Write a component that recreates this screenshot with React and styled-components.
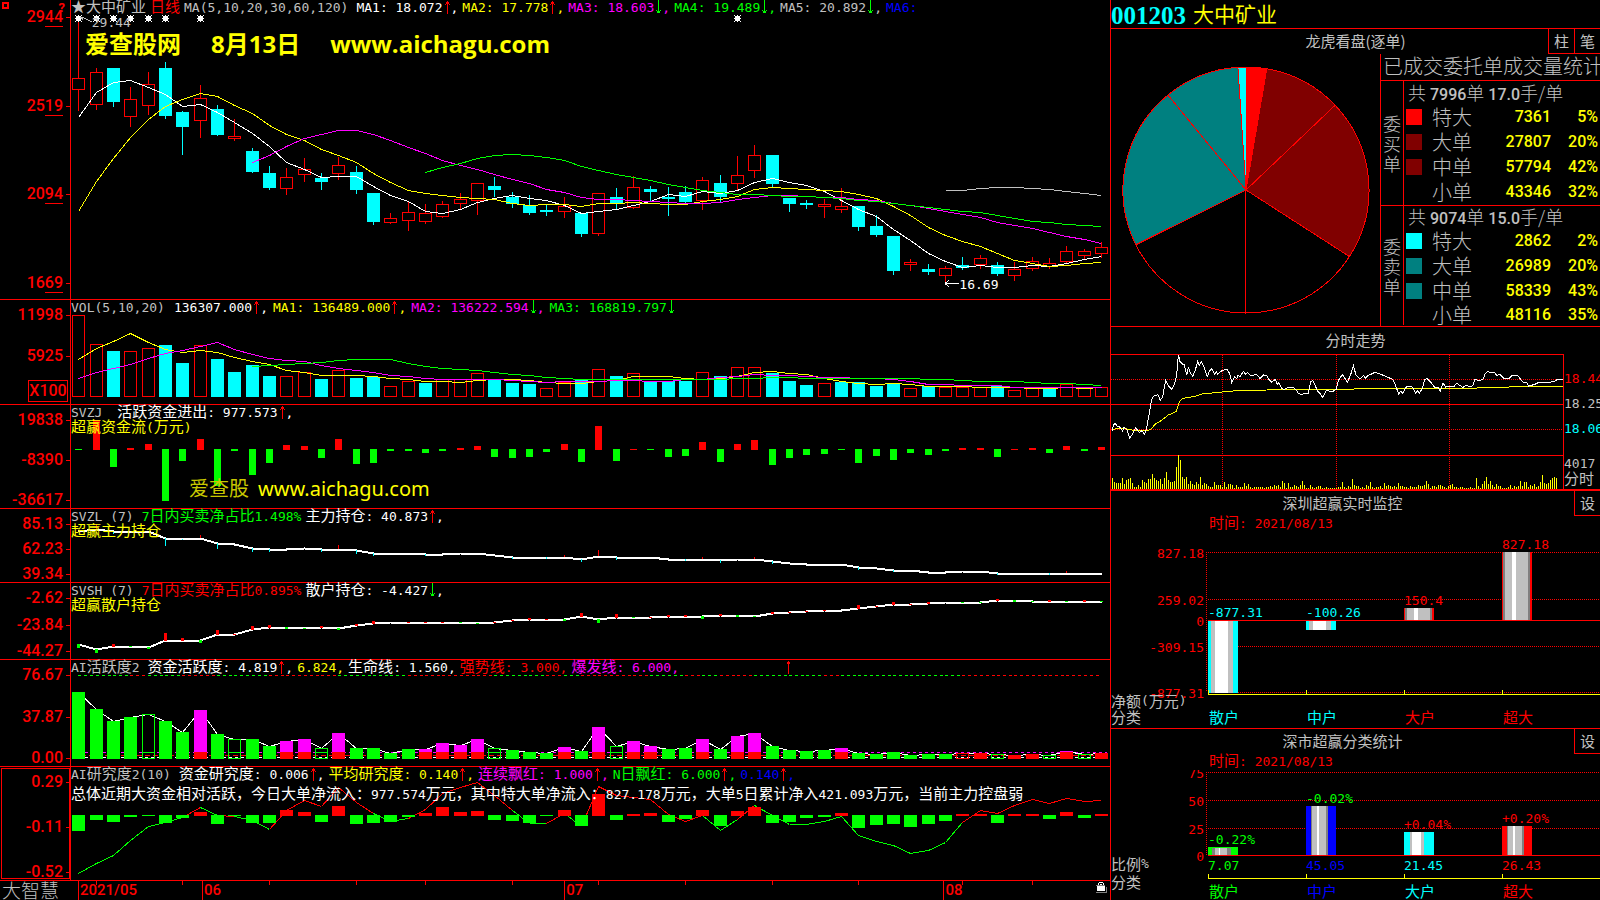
import styled, { createGlobalStyle } from "styled-components";

const RED = "#ff0000";
const CYAN = "#00ffff";
const YELLOW = "#ffff00";
const GREEN = "#00ff00";
const MAGENTA = "#ff00ff";
const GREY = "#c0c0c0";
const BLUE = "#0000ff";
const CHART_WIDTH = 1039;

const candles = [
  ["r", 22, 78, 90, 110], ["r", 68, 72, 105, 109], ["c", 68, 68, 102, 106], ["r", 87, 99, 117, 126],
  ["r", 72, 84, 106, 114], ["c", 62, 68, 116, 118], ["c", 111, 112, 127, 154], ["r", 85, 98, 121, 137],
  ["c", 105, 109, 135, 135], ["r", 119, 136, 139, 140], ["c", 148, 151, 172, 172], ["c", 166, 173, 188, 189],
  ["r", 168, 177, 189, 194], ["r", 158, 169, 175, 181], ["c", 173, 178, 182, 189], ["r", 157, 165, 174, 179],
  ["c", 166, 172, 190, 193], ["c", 193, 193, 222, 224], ["r", 213, 218, 223, 223], ["r", 202, 212, 221, 230],
  ["r", 204, 213, 222, 223], ["r", 201, 204, 217, 217], ["r", 193, 199, 204, 209], ["r", 183, 183, 201, 214],
  ["c", 177, 186, 190, 196], ["c", 192, 197, 204, 207], ["c", 195, 205, 213, 214], ["c", 204, 210, 212, 215],
  ["r", 197, 206, 212, 217], ["c", 213, 213, 234, 236], ["r", 193, 193, 234, 235], ["c", 188, 197, 204, 208],
  ["r", 176, 187, 208, 208], ["c", 186, 189, 192, 200], ["c", 187, 197, 199, 215], ["c", 186, 192, 202, 203],
  ["r", 177, 180, 201, 209], ["c", 175, 183, 197, 202], ["r", 156, 175, 184, 189], ["r", 145, 155, 171, 177],
  ["c", 155, 155, 184, 186], ["c", 198, 198, 204, 211], ["c", 200, 203, 205, 208], ["r", 199, 204, 207, 217],
  ["r", 188, 206, 210, 212], ["c", 206, 206, 227, 230], ["c", 215, 226, 235, 236], ["c", 236, 236, 271, 274],
  ["r", 259, 262, 265, 270], ["c", 264, 269, 272, 274], ["r", 266, 268, 276, 283], ["c", 257, 265, 268, 269],
  ["r", 255, 258, 265, 268], ["c", 262, 265, 274, 275], ["r", 262, 269, 276, 280], ["r", 257, 261, 269, 270],
  ["r", 258, 263, 267, 268], ["r", 246, 251, 262, 263], ["r", 249, 251, 256, 259], ["r", 242, 247, 254, 257],
];

const priceLines = [
  { color: "#fff", start: 0, ys: [117, 92, 82, 80, 87, 94, 106, 104, 112, 122, 133, 146, 162, 169, 177, 176, 176, 186, 195, 201, 211, 213, 209, 202, 198, 195, 198, 200, 205, 213, 211, 209, 205, 201, 194, 196, 191, 193, 190, 182, 178, 182, 185, 191, 200, 209, 216, 229, 240, 253, 261, 267, 265, 267, 267, 265, 266, 263, 259, 256] },
  { color: YELLOW, start: 0, ys: [211, 181, 158, 137, 119, 106, 99, 93, 96, 105, 113, 125, 134, 140, 149, 155, 162, 173, 182, 190, 193, 195, 197, 198, 199, 203, 205, 204, 204, 206, 203, 203, 202, 203, 204, 204, 201, 199, 196, 189, 187, 188, 189, 190, 191, 194, 198, 206, 215, 227, 235, 241, 246, 253, 260, 263, 266, 265, 263, 262] },
  { color: MAGENTA, start: 10, ys: [162, 155, 146, 138, 134, 130, 130, 134, 140, 147, 153, 160, 165, 169, 174, 179, 183, 189, 192, 197, 199, 199, 200, 201, 202, 203, 203, 202, 199, 197, 195, 195, 196, 197, 197, 199, 200, 203, 205, 208, 211, 214, 217, 222, 225, 228, 232, 236, 239, 243] },
  { color: GREEN, start: 20, ys: [172, 167, 163, 158, 155, 154, 155, 157, 160, 166, 170, 174, 177, 180, 184, 187, 190, 192, 194, 194, 195, 196, 196, 197, 198, 200, 201, 203, 205, 207, 209, 211, 212, 215, 218, 221, 222, 224, 225, 226] },
  { color: GREY, start: 50, ys: [190, 190, 188, 187, 187, 188, 189, 191, 193, 195] },
];

const volumeKinds = "rrcrrccrcccc" + "rrcrccrrcrrr" + "cccrrcrcrccc" + "rcrrcccrcccc" + "rcrrrcrrcrrr";
const volumeTops = [15, 44, 51, 51, 48, 45, 63, 45, 59, 72, 65, 76, 76, 72, 79, 70, 78, 77, 86, 81, 83, 79, 79, 73, 80, 83, 84, 88, 82, 79, 69, 76, 73, 81, 81, 81, 72, 76, 67, 67, 73, 81, 85, 83, 82, 82, 86, 84, 88, 86, 87, 87, 87, 86, 90, 88, 88, 84, 88, 87];
const volumeLines = [
  { color: YELLOW, start: 0, ys: [59, 48, 41, 33, 42, 49, 52, 50, 52, 57, 61, 64, 70, 72, 75, 75, 75, 76, 78, 79, 81, 81, 82, 80, 79, 79, 80, 82, 83, 83, 81, 80, 76, 76, 76, 78, 79, 78, 76, 72, 71, 73, 74, 78, 81, 83, 84, 83, 84, 86, 86, 86, 87, 87, 87, 88, 88, 87, 88, 87] },
  { color: MAGENTA, start: 0, ys: [78, 72, 68, 64, 58, 53, 50, 46, 42, 49, 54, 58, 60, 61, 65, 68, 70, 72, 75, 76, 78, 79, 79, 79, 79, 80, 81, 82, 81, 81, 81, 80, 80, 81, 81, 79, 79, 77, 76, 74, 75, 75, 76, 77, 77, 78, 78, 79, 81, 84, 84, 85, 85, 85, 87, 87, 87, 87, 87, 87] },
  { color: GREEN, start: 10, ys: [66, 65, 64, 63, 62, 60, 59, 59, 59, 63, 66, 68, 69, 70, 72, 74, 75, 77, 78, 79, 79, 79, 79, 79, 79, 79, 79, 79, 78, 78, 77, 77, 78, 78, 78, 78, 78, 78, 78, 79, 79, 80, 81, 81, 81, 82, 83, 83, 84, 85] },
];

const flow = [-1, 30, -18, 2, 6, -52, -12, 11, -37, -2, -26, -14, 5, 4, -9, 11, -15, -14, -2, -2, -4, -2, 2, 4, -8, -9, -8, -3, 6, -13, 24, -12, 1, -1, -8, -7, 8, -13, 6, 10, -16, -9, -6, -5, -1, -14, -7, -11, -4, -6, -2, 2, 2, -8, 1, 2, -4, 4, -2, 3];

const mainHold = [22, 20, 22, 22, 22, 29, 30, 29, 34, 35, 39, 40, 40, 39, 40, 40, 41, 44, 44, 44, 45, 45, 44, 44, 46, 48, 48, 48, 48, 50, 47, 48, 48, 48, 50, 50, 50, 51, 50, 50, 52, 54, 55, 55, 55, 58, 59, 61, 61, 63, 63, 62, 62, 64, 64, 64, 64, 64, 64, 64];
const mainTicks = [[1, -5], [2, 3], [5, 8], [6, 1], [7, -3], [8, 6], [10, 4], [11, 3], [14, 3], [15, -4], [16, 4], [17, 3], [20, 2], [25, 2], [27, 2], [28, -2], [29, 3], [30, -6], [31, 3], [35, 2], [36, -2], [37, 3], [39, -2], [40, 3], [45, 3], [47, 2], [53, 2], [56, 2], [57, -2]];

const retailHold = [61, 66, 63, 63, 64, 57, 57, 57, 51, 51, 46, 44, 44, 45, 44, 45, 42, 40, 39, 39, 39, 39, 39, 40, 39, 37, 36, 36, 36, 33, 36, 34, 34, 34, 33, 33, 33, 32, 32, 33, 30, 29, 28, 27, 27, 25, 23, 21, 21, 20, 19, 19, 19, 17, 17, 18, 18, 18, 18, 18];
const retailTicks = [[0, 4], [1, 4], [2, -3], [3, 1], [4, 2], [5, -8], [6, -3], [7, 3], [8, -5], [9, -1], [10, -4], [11, -3], [12, 2], [13, 1], [14, -2], [15, 2], [16, -2], [17, -3], [19, -1], [20, -1], [21, -1], [22, 1], [23, 1], [24, -1], [25, -1], [26, -2], [27, -1], [28, 2], [29, -4], [30, 4], [31, -4], [32, 1], [33, -1], [34, -2], [35, -2], [36, 3], [37, -2], [38, 2], [39, 1], [40, -2], [41, -1], [42, -1], [43, -1], [45, -4], [46, -1], [47, -3], [48, -1], [49, -2], [51, 1], [52, 1], [53, -2], [54, 2], [55, 1], [56, -2], [57, 1], [58, -2], [59, 1]];

// g green, h hollow green, m magenta over red, r red, o hollow red
const activityKinds = "gggghggmghgg" + "mmhmggggmmmm" + "hgggmgmhmmgg" + "mgmmggggmggg" + "gggorhrrhmhr";
const activityTops = [32, 49, 61, 57, 54, 61, 72, 50, 74, 79, 79, 86, 81, 79, 88, 73, 88, 88, 93, 89, 89, 83, 85, 79, 88, 90, 92, 93, 87, 91, 67, 86, 81, 86, 89, 88, 79, 89, 76, 73, 86, 90, 91, 90, 88, 93, 94, 92, 95, 94, 94, 93, 93, 94, 95, 94, 95, 91, 94, 93];
const alertColors = "gggrggrrgggrrrrggggrrrrrgggrgrrrrggrgrrggggrgggggggrrrrrrrr";

const research = [-16, -5, -7, -2, -1, -8, -3, 4, -9, -1, -8, -8, 6, 4, -7, 10, -9, -8, -7, -2, 3, 9, 4, 5, -5, -6, -8, -1, 6, -11, 22, -5, 2, 3, -7, -4, 6, -11, 5, 9, -8, -7, -3, -2, 3, -13, -10, -9, -12, -9, -6, 2, 2, -8, 2, 2, -4, 4, -3, 2];
const researchLine = [106, 96, 88, 73, 59, 55, 50, 40, 48, 49, 53, 62, 43, 33, 39, 20, 35, 46, 54, 51, 42, 26, 20, 15, 28, 43, 56, 56, 46, 59, 19, 28, 30, 32, 47, 54, 48, 63, 52, 38, 48, 57, 57, 54, 49, 68, 74, 78, 86, 83, 75, 55, 43, 46, 38, 32, 36, 31, 34, 33];
const researchColors = "ggggggrgrggrrrrrrggrrrrrrggrgrrrrrrrgg" + "rgggggggggggg" + "rrrrrrrr";

const intradayPrice = "36,334 41,314 46,310 52,320 58,320 63,326 68,333 72,322 80,328 84,340 89,354 95,346 98,340 107,322 113,332 119,337 126,332 134,343 140,325 146,290 152,255 157,232 163,227 174,224 181,241 188,230 193,203 197,181 204,196 215,208 224,190 230,165 235,104 240,125 248,133 253,134 260,166 265,143 272,160 278,169 286,150 293,124 298,136 304,125 311,139 322,169 329,152 335,146 344,162 350,155 353,163 362,154 380,147 389,160 395,187 404,170 410,176 414,165 420,170 430,154 437,163 443,157 452,167 470,163 480,175 491,165 501,168 508,180 515,187 526,178 531,193 537,188 545,205 552,209 563,203 580,202 590,212 595,221 603,223 625,220 632,186 638,181 643,190 652,212 661,222 668,233 679,211 697,215 709,208 715,182 727,163 734,174 742,187 752,164 760,137 768,165 780,177 791,166 795,175 804,167 825,157 838,161 855,168 878,178 884,190 890,206 896,222 902,214 908,219 920,199 932,198 938,202 947,219 952,212 959,219 968,203 974,178 981,176 995,190 1004,202 1014,202 1021,213 1029,189 1037,201 1062,199 1070,190 1081,197 1088,203 1098,196 1110,200 1118,197 1125,178 1138,182 1150,177 1155,162 1163,154 1172,158 1182,156 1190,166 1200,163 1210,174 1225,177 1237,166 1254,168 1264,181 1270,188 1280,188 1286,198 1305,193 1318,186 1333,188 1350,187 1365,183 1372,178 1390,178";
const intradayAverage = "36,330 50,325 72,325 95,330 145,331 155,326 165,313 180,304 190,297 205,285 228,275 237,248 245,237 260,233 285,229 310,221 350,218 385,214 430,211 500,210 510,208 760,208 766,206 1125,205 1135,203 1228,201 1235,199 1390,199";
const intradayVolume = [33, 20, 18, 18, 18, 33, 15, 27, 30, 33, 18, 6, 6, 12, 6, 27, 21, 18, 30, 30, 45, 33, 27, 24, 30, 15, 33, 51, 27, 21, 21, 24, 66, 102, 87, 36, 30, 36, 15, 24, 15, 12, 21, 15, 36, 12, 18, 15, 9, 6, 6, 21, 12, 12, 12, 6, 21, 6, 15, 15, 12, 3, 12, 6, 6, 6, 18, 9, 15, 6, 3, 6, 6, 6, 6, 6, 3, 6, 6, 9, 6, 12, 9, 12, 6, 24, 18, 3, 18, 6, 6, 12, 9, 6, 12, 24, 12, 3, 3, 12, 6, 3, 6, 9, 9, 3, 3, 6, 3, 3, 3, 3, 3, 6, 6, 21, 6, 3, 9, 6, 30, 12, 9, 9, 3, 6, 3, 12, 9, 21, 6, 3, 6, 6, 9, 3, 18, 9, 12, 9, 6, 9, 6, 18, 9, 9, 6, 6, 3, 9, 6, 6, 6, 12, 9, 9, 12, 24, 15, 3, 9, 9, 6, 12, 12, 9, 6, 3, 9, 12, 15, 6, 6, 3, 6, 6, 3, 3, 3, 6, 3, 3, 33, 9, 3, 15, 24, 36, 15, 24, 12, 6, 15, 9, 9, 3, 3, 3, 6, 12, 3, 9, 6, 9, 24, 9, 21, 21, 6, 12, 9, 15, 6, 9, 21, 42, 18, 15, 18, 27, 33, 36, 33];

const orders = [
  {
    side: "委买单",
    count: "7996",
    average: "17.0",
    rows: [
      ["特大", 7361, "5%", "#ff0000"],
      ["大单", 27807, "20%", "#800000"],
      ["中单", 57794, "42%", "#800000"],
      ["小单", 43346, "32%", "#000000"],
    ],
  },
  {
    side: "委卖单",
    count: "9074",
    average: "15.0",
    rows: [
      ["特大", 2862, "2%", "#00ffff"],
      ["大单", 26989, "20%", "#008080"],
      ["中单", 58339, "43%", "#008080"],
      ["小单", 48116, "35%", "#000000"],
    ],
  },
];

const xAt = (i) => Math.round(7.4 + 17.33 * i);

// Han characters are set larger than the digits and Latin letters
function Mixed({ children, svg }) {
  const Tag = svg ? HanTspan : Han;
  return String(children)
    .split(/([\u3000-\u9fff\uff00-\uffef]+)/)
    .map((part, i) => (i % 2 ? <Tag key={i}>{part}</Tag> : part));
}

function Arrow({ dir }) {
  const color = dir === "up" ? RED : GREEN;
  return (
    <ArrowSvg viewBox="0 0 7 15" aria-hidden="true">
      <path
        d={dir === "up" ? "M3 1h1v13H3zM2 2h3v2H2zM1 4h1v1H1zM5 4h1v1H5z" : "M3 0h1v13H3zM2 11h3v2H2zM1 10h1v1H1zM5 10h1v1H5z"}
        fill={color}
      />
    </ArrowSvg>
  );
}

function Reading({ color, dir, tail = ",", children }) {
  return (
    <ReadingText $color={color}>
      <Mixed>{children}</Mixed>
      {dir && <Arrow dir={dir} />}
      {tail}
    </ReadingText>
  );
}

function Line({ color, start = 0, ys, width = 1 }) {
  return (
    <polyline
      fill="none"
      stroke={color}
      strokeWidth={width}
      points={ys.map((y, i) => `${xAt(i + start) + 0.5},${y + 0.5}`).join(" ")}
    />
  );
}

function SignedBars({ values, zero, half }) {
  return values.map((v, i) => (
    <rect
      key={i}
      x={xAt(i) - half}
      width={half * 2 + 1}
      y={v > 0 ? zero + 1 - v : zero}
      height={Math.abs(v)}
      fill={v > 0 ? RED : GREEN}
    />
  ));
}

function Hollow({ i, top, bottom, color }) {
  return (
    <rect
      x={xAt(i) - 5.5}
      y={top + 0.5}
      width={12}
      height={Math.max(bottom - top - 1, 1)}
      fill="none"
      stroke={color}
    />
  );
}

function Panel({ labels, axis, height, header, children }) {
  return (
    <PanelRow>
      {axis || (
        <Axis>
          <Scale labels={labels} />
        </Axis>
      )}
      <Plot>
        <Chart viewBox={`0 0 ${CHART_WIDTH} ${height}`} preserveAspectRatio="none">
          {children}
        </Chart>
        {header}
      </Plot>
    </PanelRow>
  );
}

function Scale({ labels, underlined }) {
  return (
    <ScaleList>
      {labels.map((label) => (
        <ScaleLabel key={label} $underlined={underlined}>
          {label}
        </ScaleLabel>
      ))}
    </ScaleList>
  );
}

function PricePanel() {
  return (
    <Panel
      height={299}
      axis={
        <Axis $top={9} $bottom={8}>
          <CornerMark />
          <Question>?</Question>
          <Scale labels={["2944", "2519", "2094", "1669"]} underlined />
        </Axis>
      }
      header={
        <>
          <Header $gap={4}>
            <Title>
              <Han>★大中矿业</Han>
            </Title>
            <Title $color={RED}>
              <Han>日线</Han>
            </Title>
            <Title $last>MA(5,10,20,30,60,120)</Title>
            <Reading color="#fff" dir="up">MA1: 18.072</Reading>
            <Reading color={YELLOW} dir="up">MA2: 17.778</Reading>
            <Reading color={MAGENTA} dir="down">MA3: 18.603</Reading>
            <Reading color={GREEN} dir="down">MA4: 19.489</Reading>
            <Reading color={GREY} dir="down">MA5: 20.892</Reading>
            <Reading color={BLUE} tail="">MA6:</Reading>
          </Header>
          <Banner>
            <span>爱查股网</span>
            <span>8月13日</span>
            <span>www.aichagu.com</span>
          </Banner>
          <PriceNote $left={2} $top={15} $color={GREY}>29.44</PriceNote>
          <PriceNote $left={85.5} $top={277} $color="#fff">16.69</PriceNote>
        </>
      }
    >
      {candles.map(([kind, high, top, bottom, low], i) => (
        <g key={i}>
          <path
            d={`M${xAt(i) + 0.5} ${high}V${top}M${xAt(i) + 0.5} ${bottom}V${low + 1}`}
            stroke={kind === "r" ? RED : CYAN}
          />
          {kind === "r" ? (
            <Hollow i={i} top={top} bottom={bottom} color={RED} />
          ) : (
            <rect x={xAt(i) - 6} y={top} width={13} height={bottom - top} fill={CYAN} />
          )}
        </g>
      ))}
      {priceLines.map((line) => (
        <Line key={line.color} {...line} />
      ))}
      {[0, 1, 2, 3, 4, 5, 7, 38].map((i) => (
        <path
          key={i}
          d={`M${xAt(i) - 2} 16h5v5h-5zM${xAt(i) - 3} 15h1v1h-1zM${xAt(i) + 3} 15h1v1h-1zM${xAt(i) - 3} 21h1v1h-1zM${xAt(i) + 3} 21h1v1h-1zM${xAt(i)} 15h1v7h-1zM${xAt(i) - 3} 18h7v1h-7z`}
          fill="#fff"
        />
      ))}
      <path d="M9 17l4 1l8 4M10 17l2 3" stroke={GREY} fill="none" />
      <path d="M874 283.5h14M874 283.5l4 -3M874 283.5l4 3" stroke="#fff" fill="none" />
    </Panel>
  );
}

function VolumePanel() {
  return (
    <Panel
      height={104}
      axis={
        <Axis>
          <Scale labels={["11998", "5925"]} />
          <UnitBox>X100</UnitBox>
        </Axis>
      }
      header={
        <Header $gap={5}>
          <Title $last>VOL(5,10,20)</Title>
          <Reading color="#fff" dir="up">136307.000</Reading>
          <Reading color={YELLOW} dir="up">MA1: 136489.000</Reading>
          <Reading color={MAGENTA} dir="down">MA2: 136222.594</Reading>
          <Reading color={GREEN} dir="down" tail="">MA3: 168819.797</Reading>
        </Header>
      }
    >
      {volumeTops.map((top, i) =>
        volumeKinds[i] === "r" ? (
          <Hollow key={i} i={i} top={top} bottom={97} color={RED} />
        ) : (
          <rect key={i} x={xAt(i) - 6} y={top} width={13} height={97 - top} fill={CYAN} />
        )
      )}
      {volumeLines.map((line) => (
        <Line key={line.color} {...line} />
      ))}
    </Panel>
  );
}

function FlowPanel() {
  return (
    <Panel
      height={103}
      labels={["19838", "-8390", "-36617"]}
      header={
        <>
          <Header>
            <Title $last>SVZJ </Title>
            <Reading color="#fff" dir="up">活跃资金进出: 977.573</Reading>
          </Header>
          <SubHeader>
            <Mixed>超赢资金流(万元)</Mixed>
          </SubHeader>
          <SiteMark>
            <b>爱查股</b>
            <span>www.aichagu.com</span>
          </SiteMark>
        </>
      }
    >
      <SignedBars values={flow} zero={44} half={3} />
    </Panel>
  );
}

function MainHoldPanel() {
  return (
    <Panel
      height={73}
      labels={["85.13", "62.23", "39.34"]}
      header={
        <>
          <Header $gap={4}>
            <Title $last>SVZL (7)</Title>
            <Reading color={GREEN} tail="">7日内买卖净占比1.498%</Reading>
            <Reading color="#fff" dir="up">主力持仓: 40.873</Reading>
          </Header>
          <SubHeader>
            <Han>超赢主力持仓</Han>
          </SubHeader>
        </>
      }
    >
      <Line color="#fff" ys={mainHold} width={2} />
      {mainTicks.map(([i, d]) => (
        <rect
          key={i}
          x={xAt(i)}
          width={1}
          y={d > 0 ? mainHold[i] : mainHold[i] + d}
          height={Math.abs(d)}
          fill={d > 0 ? CYAN : RED}
        />
      ))}
    </Panel>
  );
}

function RetailHoldPanel() {
  return (
    <Panel
      height={76}
      labels={["-2.62", "-23.84", "-44.27"]}
      header={
        <>
          <Header $gap={4}>
            <Title $last>SVSH (7)</Title>
            <Reading color={RED} tail="">7日内买卖净占比0.895%</Reading>
            <Reading color="#fff" dir="down">散户持仓: -4.427</Reading>
          </Header>
          <SubHeader>
            <Han>超赢散户持仓</Han>
          </SubHeader>
        </>
      }
    >
      <Line color="#fff" ys={retailHold} width={2} />
      {retailTicks.map(([i, d]) => (
        <rect
          key={i}
          x={xAt(i) - 1}
          width={3}
          y={d > 0 ? retailHold[i] : retailHold[i] + 1 + d}
          height={Math.abs(d)}
          fill={d > 0 ? GREEN : RED}
        />
      ))}
    </Panel>
  );
}

function ActivityPanel() {
  return (
    <Panel
      height={106}
      labels={["76.67", "37.87", "0.00"]}
      header={
        <Header $gap={4}>
          <Title $last>
            <Mixed>AI活跃度2</Mixed>
          </Title>
          <Reading color="#fff" dir="up">资金活跃度: 4.819</Reading>
          <Reading color={YELLOW}>6.824</Reading>
          <Reading color="#fff">生命线: 1.560</Reading>
          <Reading color={RED}>强势线: 3.000</Reading>
          <Reading color={MAGENTA}>爆发线: 6.000</Reading>
        </Header>
      }
    >
      {[...alertColors].map((c, i) => (
        <path
          key={i}
          d={`M${xAt(i)} 15.5H${xAt(i + 1)}`}
          stroke={c === "g" ? GREEN : RED}
          strokeDasharray="3 3"
        />
      ))}
      <path d="M717 1h1v13h-1zM716 2h3v2h-3z" fill={RED} />
      <path d="M2 92.5H1036" stroke={MAGENTA} strokeDasharray="3 3" />
      <path d="M2 95.5H1036" stroke={RED} strokeDasharray="5 3" />
      <path d="M2 97.5H1036" stroke="#fff" strokeDasharray="3 3" />
      <Line color="#fff" ys={activityTops} />
      {activityTops.map((top, i) => {
        const kind = activityKinds[i];
        if (kind === "h" || kind === "o") {
          const color = kind === "h" ? GREEN : RED;
          return (
            <g key={i}>
              <Hollow i={i} top={top} bottom={99} color={color} />
              {top < 91 && <path d={`M${xAt(i) - 5} 92.5h12`} stroke={color} />}
            </g>
          );
        }
        return (
          <g key={i}>
            <rect
              x={xAt(i) - 6}
              y={top}
              width={13}
              height={99 - top}
              fill={{ g: GREEN, m: MAGENTA, r: RED }[kind]}
            />
            {kind === "m" && <rect x={xAt(i) - 6} y={92} width={13} height={7} fill={RED} />}
          </g>
        );
      })}
    </Panel>
  );
}

function ResearchPanel() {
  return (
    <Panel
      height={113}
      axis={
        <Axis $selected>
          <Scale labels={["0.29", "-0.11", "-0.52"]} />
        </Axis>
      }
      header={
        <>
          <Header $gap={4}>
            <Title $last>
              <Mixed>AI研究度2(10)</Mixed>
            </Title>
            <Reading color="#fff" dir="up">资金研究度: 0.006</Reading>
            <Reading color={YELLOW} dir="up">平均研究度: 0.140</Reading>
            <Reading color={MAGENTA} dir="up">连续飘红: 1.000</Reading>
            <Reading color={GREEN} dir="up">N日飘红: 6.000</Reading>
            <Reading color={BLUE} dir="up">0.140</Reading>
          </Header>
          <Summary>
            <Mixed>
              总体近期大资金相对活跃，今日大单净流入：977.574万元，其中特大单净流入：827.178万元，大单5日累计净入421.093万元，当前主力控盘弱
            </Mixed>
          </Summary>
        </>
      }
    >
      {researchLine.slice(0, -1).map((y, i) => (
        <path
          key={i}
          d={`M${xAt(i) + 0.5} ${y + 0.5}L${xAt(i + 1) + 0.5} ${researchLine[i + 1] + 0.5}`}
          stroke={researchColors[i] === "g" ? GREEN : RED}
        />
      ))}
      <SignedBars values={research} zero={48} half={6} />
    </Panel>
  );
}

function TimeAxis() {
  return (
    <TimeRow>
      <Brand>大智慧</Brand>
      <Months>
        <MonthTicks viewBox={`0 0 ${CHART_WIDTH} 19`} preserveAspectRatio="none">
          {[1, 6, 11, 16, 20, 25, 30, 35, 40, 45, 51, 55].map((i) => (
            <path key={i} d={`M${xAt(i) + 0.5} 0v4`} stroke={RED} />
          ))}
        </MonthTicks>
        <Month $days={7}>2021/05</Month>
        <Month $days={21}>06</Month>
        <Month $days={22}>07</Month>
        <Month $days={9.5}>
          08
          <Lock viewBox="0 0 11 12" role="img" aria-label="锁定">
            <path d="M3 0h4v1H3zM2 1h1v2H2zM7 1h1v2H7zM4 2h2v1H4z" fill="#fff" />
            <path d="M1 4h8v5H1z" fill="#fff" />
            <path d="M0 3.5h9M0 10.5h10V5" stroke="#808080" fill="none" />
          </Lock>
        </Month>
      </Months>
    </TimeRow>
  );
}

function OrderPie() {
  const cx = 135;
  const cy = 136;
  const r = 123;
  const total = orders.flatMap((o) => o.rows).reduce((sum, row) => sum + row[1], 0) / 2;
  const point = (deg) => {
    const a = (deg * Math.PI) / 180;
    return `${cx + r * Math.sin(a)} ${cy - r * Math.cos(a)}`;
  };
  const slices = [];
  [1, -1].forEach((turn, side) => {
    let angle = 0;
    orders[side].rows.forEach(([, value, , color]) => {
      const next = angle + (value / total) * 180;
      const [from, to] = turn > 0 ? [angle, next] : [-next, -angle];
      slices.push({ color, d: `M${cx} ${cy}L${point(from)}A${r} ${r} 0 0 1 ${point(to)}Z` });
      angle = next;
    });
  });
  return (
    <PieSvg viewBox="0 0 269 272" role="img" aria-label="委托单成交量">
      {slices.map((s, i) => (
        <path key={i} d={s.d} fill={s.color} stroke={RED} />
      ))}
    </PieSvg>
  );
}

function OrderPanel() {
  return (
    <OrderSection>
      <OrderHeader>
        <SideTitle>
          <Mixed>龙虎看盘(逐单)</Mixed>
        </SideTitle>
        <ButtonGroup>
          <SquareButton type="button">柱</SquareButton>
          <SquareButton type="button">笔</SquareButton>
        </ButtonGroup>
      </OrderHeader>
      <OrderBody>
        <OrderPie />
        <OrderStats>
          <OrderHeading>已成交委托单成交量统计</OrderHeading>
          <OrderTable>
            {orders.map((order) => (
              <tbody key={order.side}>
                <tr>
                  <Side rowSpan={5} scope="rowgroup">{order.side}</Side>
                  <Total colSpan={4}>
                    共 <b>{order.count}</b>单 <b>{order.average}</b>手/单
                  </Total>
                </tr>
                {order.rows.map(([name, value, share, color]) => (
                  <tr key={name}>
                    <SwatchCell>
                      <Swatch $color={color} />
                    </SwatchCell>
                    <SizeName scope="row">{name}</SizeName>
                    <Amount>{value}</Amount>
                    <Amount $share>{share}</Amount>
                  </tr>
                ))}
              </tbody>
            ))}
          </OrderTable>
        </OrderStats>
      </OrderBody>
    </OrderSection>
  );
}

function IntradayPanel() {
  return (
    <IntradaySection>
      <SideTitle $height={26}>分时走势</SideTitle>
      <IntradayBody>
        <IntradaySvg viewBox="33 99 1359 408">
          <g stroke={RED} strokeWidth="3" fill="none">
            <path d="M33 103.5H1390.5V507M33 253.5H1390M33 406.5H1390" />
            <path
              d="M33 178.5H1390M33 328.5H1390M367.5 105V507M709.5 105V507M1048.5 105V507"
              strokeDasharray="3 3"
            />
          </g>
          {intradayVolume.map((v, i) => (
            <rect key={i} x={36 + i * 6} y={507 - v} width={3} height={v} fill={YELLOW} />
          ))}
          <polyline points={intradayAverage} stroke={YELLOW} strokeWidth="3" fill="none" />
          <polyline points={intradayPrice} stroke="#fff" strokeWidth="3" fill="none" />
        </IntradaySvg>
        <IntradayLabels>
          <IntradayPrice $color={RED}>18.44</IntradayPrice>
          <IntradayPrice $color={GREY}>18.25</IntradayPrice>
          <IntradayPrice $color={CYAN}>18.06</IntradayPrice>
          <IntradayFoot>
            4017
            <br />
            <Han>分时</Han>
          </IntradayFoot>
        </IntradayLabels>
      </IntradayBody>
    </IntradaySection>
  );
}

// each stripe: colour and width, 30 in total
const tubes = {
  wide: (c) => [[c, 3], [GREY, 4], ["#fff", 13], [GREY, 5], [c, 5]],
  rise: (c) => [[c, 1], ["#808080", 2], [GREY, 7], ["#fff", 4], [GREY, 12], ["#808080", 2], [c, 2]],
  low: (c) => [[c, 4], ["#808080", 3], [GREY, 4], ["#fff", 1], [GREY, 7], ["#808080", 4], [c, 7]],
  slim: (c) => [[c, 5], ["#808080", 1], [GREY, 5], ["#fff", 2], [GREY, 7], ["#808080", 2], [c, 8]],
  mid: (c) => [[c, 6], [GREY, 2], ["#fff", 9], [GREY, 3], [c, 10]],
};

function BarChart({ title, height, ticks, zero, axisY, bars, captions, nameY }) {
  return (
    <BarSection>
      <BarHeader>
        <SideTitle>{title}</SideTitle>
        <SquareButton type="button">设</SquareButton>
      </BarHeader>
      <DateLine>
        <Mixed>时间: 2021/08/13</Mixed>
      </DateLine>
      <BarSvg height={height}>
        {ticks.map(([label, y, textY]) => (
          <g key={label}>
            <text x={93} y={textY} fill={RED} textAnchor="end">{label}</text>
            {y !== zero && (
              <line x1={97} x2="100%" y1={y + 0.5} y2={y + 0.5} stroke={RED} strokeDasharray="1 1" />
            )}
          </g>
        ))}
        <line
          x1={95.5}
          x2={95.5}
          y1={ticks[0][1]}
          y2={ticks[ticks.length - 1][1]}
          stroke={RED}
          strokeDasharray="1 1"
        />
        {bars.map((bar, i) => {
          const left = 97 + i * 98;
          let x = left;
          return (
            <g key={bar.name}>
              {tubes[bar.tube](bar.color).map(([fill, width], n) => {
                const stripe = (
                  <rect key={n} x={x} y={bar.top} width={width} height={bar.bottom - bar.top} fill={fill} />
                );
                x += width;
                return stripe;
              })}
              {bar.tube === "low" && <rect x={left} y={bar.top} width={30} height={1} fill={bar.color} />}
              <text x={left} y={bar.labelY} fill={bar.labelColor || bar.color}>{bar.label}</text>
              {bar.value && (
                <text x={left} y={95} fill={bar.color}>{bar.value}</text>
              )}
              <text x={left + 1} y={nameY} fill={bar.color}>
                <HanTspan>{bar.name}</HanTspan>
              </text>
              <rect x={left} y={axisY - 4} width={1} height={4} fill={YELLOW} />
            </g>
          );
        })}
        <line x1={97} x2="100%" y1={zero + 0.5} y2={zero + 0.5} stroke={RED} />
        <line x1={97} x2="100%" y1={axisY + 0.5} y2={axisY + 0.5} stroke={YELLOW} />
        {captions.map(([text, y]) => (
          <text key={text} x={0} y={y} fill={GREY}>
            <Mixed svg>{text}</Mixed>
          </text>
        ))}
      </BarSvg>
    </BarSection>
  );
}

function App() {
  return (
    <>
      <GlobalStyles />
      <Screen>
        <Charts>
          <PricePanel />
          <VolumePanel />
          <FlowPanel />
          <MainHoldPanel />
          <RetailHoldPanel />
          <ActivityPanel />
          <ResearchPanel />
          <TimeAxis />
        </Charts>
        <Sidebar>
          <StockTitle>
            <StockCode>001203</StockCode>
            <StockName>大中矿业</StockName>
          </StockTitle>
          <OrderPanel />
          <IntradayPanel />
          <BarChart
            title="深圳超赢实时监控"
            height={196}
            ticks={[["827.18", 20, 21], ["259.02", 67, 68], ["0", 88, 89], ["-309.15", 114, 115], ["-877.31", 160, 161]]}
            zero={88}
            axisY={162}
            nameY={184}
            captions={[["净额(万元)", 168], ["分类", 184]]}
            bars={[
              { name: "散户", label: "-877.31", labelY: 80, color: CYAN, tube: "wide", top: 89, bottom: 161 },
              { name: "中户", label: "-100.26", labelY: 80, color: CYAN, tube: "wide", top: 89, bottom: 98 },
              { name: "大户", label: "150.4", labelY: 68, color: RED, tube: "rise", top: 76, bottom: 88 },
              { name: "超大", label: "827.18", labelY: 12, color: RED, tube: "rise", top: 20, bottom: 88 },
            ]}
          />
          <BarChart
            title="深市超赢分类统计"
            height={130}
            ticks={[["75", 2, 3], ["50", 30, 31], ["25", 58, 59], ["0", 85, 86]]}
            zero={85}
            axisY={108}
            nameY={120}
            captions={[["比例%", 93], ["分类", 111]]}
            bars={[
              { name: "散户", label: "-0.22%", labelY: 69, value: "7.07", color: GREEN, tube: "low", top: 77, bottom: 85 },
              { name: "中户", label: "-0.02%", labelY: 28, value: "45.05", color: BLUE, labelColor: GREEN, tube: "slim", top: 36, bottom: 85 },
              { name: "大户", label: "+0.04%", labelY: 54, value: "21.45", color: CYAN, labelColor: RED, tube: "mid", top: 62, bottom: 85 },
              { name: "超大", label: "+0.20%", labelY: 48, value: "26.43", color: RED, tube: "slim", top: 56, bottom: 85 },
            ]}
          />
        </Sidebar>
      </Screen>
    </>
  );
}

export default App;

const GlobalStyles = createGlobalStyle`
  * {
    box-sizing: border-box;
  }
  body {
    margin: 0;
    background: #000;
    color: #c0c0c0;
    font: 13px "DejaVu Sans Mono", "Noto Sans CJK SC", monospace;
  }
  svg {
    display: block;
    shape-rendering: crispEdges;
  }
`;

const Han = styled.span`
  font-family: "Noto Sans CJK SC", sans-serif;
  font-size: 15px;
  line-height: 0;
`;

const HanTspan = styled.tspan`
  font-family: "Noto Sans CJK SC", sans-serif;
  font-size: 15px;
`;

const Screen = styled.main`
  display: grid;
  grid-template-columns: minmax(0, 1fr) 490px;
  min-height: 100vh;
`;

const Charts = styled.section`
  display: grid;
  grid-template-rows: 300fr 105fr 104fr 74fr 77fr 107fr 114fr 19fr;
`;

const PanelRow = styled.div`
  display: grid;
  grid-template-columns: 71px minmax(0, 1fr);
  min-height: 0;
  border-bottom: 1px solid #f00;
`;

const Axis = styled.div`
  position: relative;
  display: flex;
  flex-direction: column;
  padding: ${({ $top = 7 }) => $top}px 0 ${({ $bottom = 0 }) => $bottom}px;
  border-right: 1px solid #f00;
  color: #f00;
  font: 500 16px/16px Roboto, sans-serif;
  outline: ${({ $selected }) => ($selected ? "1px solid #f00" : "none")};
  outline-offset: -2px;
`;

const ScaleList = styled.div`
  flex: 1;
  display: flex;
  flex-direction: column;
  justify-content: space-between;
`;

const ScaleLabel = styled.div`
  position: relative;
  padding-right: 7px;
  text-align: right;
  &::after {
    content: "";
    position: absolute;
    right: 0;
    top: 8px;
    width: 4px;
    height: 1px;
    background: #f00;
  }
  &::before {
    content: "";
    display: ${({ $underlined }) => ($underlined ? "block" : "none")};
    position: absolute;
    right: 7px;
    top: 17px;
    width: 18px;
    height: 1px;
    background: #f00;
  }
`;

const CornerMark = styled.i`
  position: absolute;
  left: 2px;
  top: 2px;
  width: 7px;
  height: 7px;
  border: 2px solid #f00;
`;

const Question = styled.b`
  position: absolute;
  right: 5px;
  top: 0;
  font-size: 13px;
`;

const UnitBox = styled.div`
  align-self: flex-end;
  width: 40px;
  height: 22px;
  margin: 16px 2px 2px 0;
  border: 1px solid #f00;
  line-height: 20px;
  text-align: center;
`;

const Plot = styled.div`
  position: relative;
  min-width: 0;
  white-space: nowrap;
`;

const Chart = styled.svg`
  position: absolute;
  inset: 0;
  width: 100%;
  height: 100%;
`;

const Header = styled.div`
  position: relative;
  display: flex;
  gap: ${({ $gap = 3 }) => $gap}px;
  height: 15px;
  line-height: 15px;
`;

const Title = styled.span`
  color: ${({ $color = "#c0c0c0" }) => $color};
  margin-right: ${({ $last }) => ($last ? 4 : 0)}px;
  white-space: pre;
`;

const ReadingText = styled.span`
  color: ${({ $color }) => $color};
`;

const ArrowSvg = styled.svg`
  display: inline-block;
  width: 7px;
  height: 15px;
  margin-left: 1px;
  vertical-align: top;
`;

const SubHeader = styled.div`
  position: relative;
  height: 15px;
  line-height: 15px;
  color: #ff0;
`;

const Summary = styled.div`
  position: relative;
  margin-top: 5px;
  line-height: 15px;
  color: #fff;
`;

const Banner = styled.div`
  position: absolute;
  left: 14px;
  top: 28px;
  display: flex;
  gap: 30px;
  color: #ff0;
  font: bold 24px/32px "Open Sans", "Noto Sans CJK SC", sans-serif;
`;

const SiteMark = styled.div`
  position: absolute;
  left: 118px;
  top: 70px;
  display: flex;
  gap: 9px;
  color: #ff0;
  font: 20px/28px "Noto Sans", "Noto Sans CJK SC", sans-serif;
  b {
    color: #c8c800;
    font-weight: 400;
  }
`;

const PriceNote = styled.div`
  position: absolute;
  left: ${({ $left }) => $left}%;
  top: ${({ $top }) => $top}px;
  line-height: 15px;
  color: ${({ $color }) => $color};
`;

const TimeRow = styled.div`
  display: grid;
  grid-template-columns: 71px minmax(0, 1fr);
  min-height: 0;
`;

const Brand = styled.div`
  padding-left: 2px;
  font: 300 19px/18px "Noto Sans CJK SC", sans-serif;
`;

const Months = styled.div`
  position: relative;
  display: flex;
  padding-left: 7px;
`;

const MonthTicks = styled.svg`
  position: absolute;
  inset: 0;
  width: 100%;
  height: 100%;
`;

const Month = styled.div`
  flex: ${({ $days }) => $days} 1 0;
  display: flex;
  justify-content: space-between;
  padding: 0 3px 0 1px;
  border-left: 1px solid #f00;
  color: #f00;
  font: 500 15px/19px Roboto, sans-serif;
`;

const Lock = styled.svg`
  width: 11px;
  height: 12px;
  margin-top: 1px;
`;

const Sidebar = styled.aside`
  display: flex;
  flex-direction: column;
  min-width: 0;
  border-left: 1px solid #f00;
  overflow: hidden;
  white-space: nowrap;
`;

const StockTitle = styled.h1`
  display: flex;
  gap: 7px;
  height: 29px;
  margin: 0;
  border-bottom: 1px solid #f00;
`;

const StockCode = styled.span`
  color: #0ff;
  font: bold 25px/32px "Liberation Serif", serif;
`;

const StockName = styled.span`
  color: #ff0;
  font: 400 21px/26px "Noto Sans CJK SC", sans-serif;
`;

const SideTitle = styled.h2`
  flex: 1;
  margin: 0;
  font: 400 15px / ${({ $height = 24 }) => $height}px "Noto Sans CJK SC", sans-serif;
  text-align: center;
`;

const SquareButton = styled.button`
  width: 26px;
  height: 25px;
  padding: 0;
  border: solid #f00;
  border-width: 0 0 1px 1px;
  background: none;
  color: #c0c0c0;
  font: 400 15px/20px "Noto Sans CJK SC", sans-serif;
  cursor: pointer;
`;

const OrderSection = styled.section`
  border-bottom: 1px solid #f00;
`;

const OrderHeader = styled.div`
  display: grid;
  grid-template-columns: 1fr auto 1fr;
  height: 25px;
  h2 {
    grid-column: 2;
  }
`;

const ButtonGroup = styled.div`
  grid-column: 3;
  justify-self: end;
  display: flex;
`;

const OrderBody = styled.div`
  display: grid;
  grid-template-columns: 269px minmax(0, 1fr);
`;

const PieSvg = styled.svg`
  width: 269px;
  height: 272px;
`;

const OrderStats = styled.div`
  border-left: 1px solid #f00;
  overflow: hidden;
`;

const OrderHeading = styled.h3`
  height: 27px;
  margin: 0;
  padding-left: 2px;
  border-bottom: 1px solid #f00;
  font: 300 20px/24px "Noto Sans CJK SC", sans-serif;
`;

const OrderTable = styled.table`
  width: 100%;
  border-spacing: 0;
  font: 300 20px/20px "Noto Sans CJK SC", sans-serif;
  td,
  th {
    height: 25px;
    padding: 0 0 1px;
    font-weight: 300;
  }
  tbody + tbody > tr:first-child > * {
    border-top: 1px solid #f00;
  }
  tbody + tbody > tr:last-child > * {
    height: 21px;
    padding-bottom: 0;
  }
`;

const Side = styled.th`
  width: 23px;
  border-right: 1px solid #f00;
  font-size: 18px;
  white-space: normal;
  word-break: break-all;
  padding: 0 2px !important;
`;

const Total = styled.td`
  height: 24px !important;
  padding: 0 0 3px 4px !important;
  font-size: 18px;
  b {
    font: 500 16px/1px Roboto, sans-serif;
  }
`;

const SwatchCell = styled.td`
  width: 28px;
  padding-left: 2px !important;
`;

const Swatch = styled.div`
  width: 16px;
  height: 16px;
  background: ${({ $color }) => $color};
`;

const SizeName = styled.th`
  text-align: left;
`;

const Amount = styled.td`
  width: ${({ $share }) => ($share ? "49px" : "auto")};
  padding-right: ${({ $share }) => ($share ? 2 : 0)}px !important;
  color: #ff0;
  font: 500 16px/20px Roboto, sans-serif;
  font-weight: 500 !important;
  text-align: right;
`;

const IntradaySection = styled.section`
  border-bottom: 2px solid #f00;
`;

const IntradayBody = styled.div`
  display: flex;
`;

const IntradaySvg = styled.svg`
  flex: none;
  width: 453px;
  height: 136px;
`;

const IntradayLabels = styled.div`
  padding-top: 13px;
`;

const IntradayPrice = styled.div`
  line-height: 25px;
  color: ${({ $color }) => $color};
`;

const IntradayFoot = styled.div`
  margin-top: 15px;
  line-height: 16px;
`;

const BarSection = styled.section`
  &:not(:last-child) {
    border-bottom: 1px solid #f00;
  }
`;

const BarHeader = styled.div`
  display: flex;
  height: 25px;
`;

const DateLine = styled.div`
  padding-left: 98px;
  line-height: 16px;
  color: #f00;
`;

const BarSvg = styled.svg`
  width: 100%;
  text {
    dominant-baseline: central;
  }
`;
